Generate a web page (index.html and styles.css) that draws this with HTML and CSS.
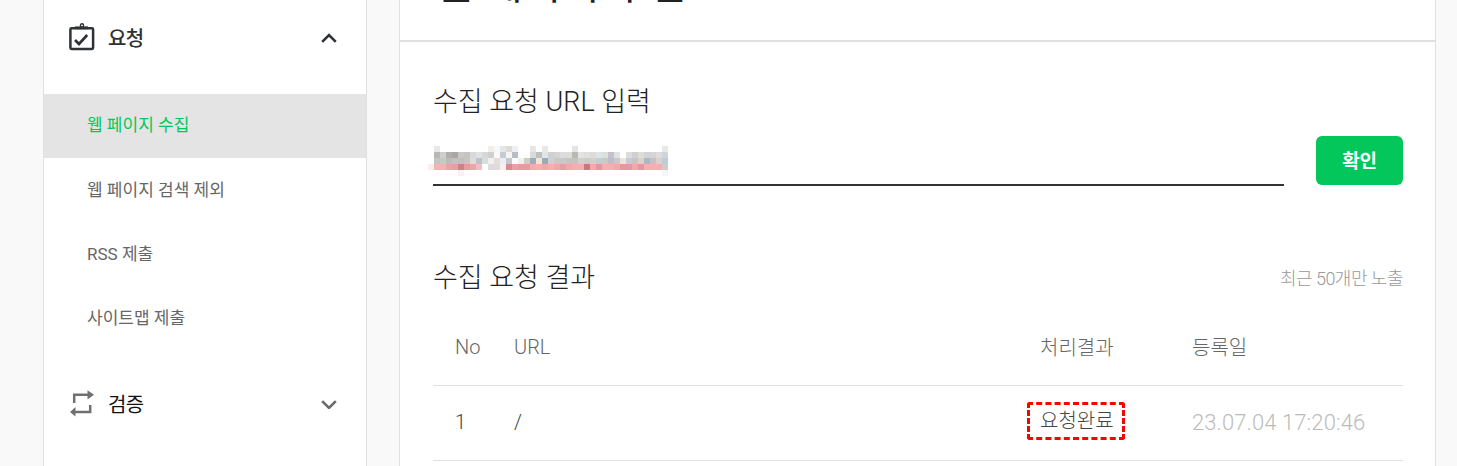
FILE: index.html
```html
<!DOCTYPE html>
<html lang="ko">
<head>
<meta charset="utf-8">
<title>웹 페이지 수집</title>
<link rel="stylesheet" href="styles.css">
</head>
<body>
<div class="shell">
  <aside class="sidebar">
    <div class="group-head">
      <svg class="group-icon" width="26" height="28" viewBox="0 0 26 28" fill="none" stroke="#2f3234" stroke-width="2.5">
        <path d="M6 5.2H2.6a1.2 1.2 0 0 0-1.2 1.2v18.4a1.2 1.2 0 0 0 1.2 1.2h20.3a1.2 1.2 0 0 0 1.2-1.2V6.400a1.200 1.200 0 0 0-1.200-1.200H19"/>
        <path d="M6 3.400h13v3.200H6z" fill="#2f3234" stroke="none"/>
        <circle cx="13" cy="2.400" r="1.600" stroke-width="1.400"/>
        <path d="M6 17l4 4 8.200-9" stroke-width="2.600"/>
      </svg>
      <span class="group-title strong">요청</span>
      <svg class="chevron" width="16" height="12" viewBox="0 0 16 12" fill="none" stroke="#2f3234" stroke-width="2.600"><path d="M1.200 10.900L8 4.100l6.800 6.800"/></svg>
    </div>
    <ul class="menu">
      <li class="menu-item active">웹 페이지 수집</li>
      <li class="menu-item">웹 페이지 검색 제외</li>
      <li class="menu-item">RSS 제출</li>
      <li class="menu-item">사이트맵 제출</li>
    </ul>
    <div class="group-head second">
      <svg class="group-icon" width="26" height="28" viewBox="0 0 26 28" fill="none" stroke="#707070" stroke-width="2.500">
        <path d="M5.200 14V5.800H19"/><path d="M18.500 1.200L25 5.800l-6.500 4.800z" fill="#707070" stroke="none"/>
        <path d="M21.200 16v7H6"/><path d="M6.500 18L1 22.900l5.500 4.600z" fill="#707070" stroke="none"/>
      </svg>
      <span class="group-title">검증</span>
      <svg class="chevron" width="16" height="12" viewBox="0 0 16 12" fill="none" stroke="#6a6a6a" stroke-width="2.600"><path d="M1.200 4.100L8 10.900l6.800-6.800"/></svg>
    </div>
  </aside>
  <main class="content">
    <header class="page-head"><h1 class="page-title">웹 페이지 수집</h1></header>
    <section class="panel">
      <h2 class="section-title first">수집 요청 URL 입력</h2>
      <div class="url-row">
        <div class="url-field">
          <svg class="mosaic" width="246" height="30" viewBox="0 0 246 30">
            <rect x="6" y="0" fill="#e8e8e8"/><rect x="60" y="0" fill="#f2eeea"/><rect x="66" y="0" fill="#f6f8fa"/><rect x="72" y="0" fill="#e6e6e6"/><rect x="78" y="0" fill="#dedcda"/><rect x="84" y="0" fill="#eeeff2"/><rect x="102" y="0" fill="#e6e6e6"/><rect x="114" y="0" fill="#e8e8e8"/><rect x="144" y="0" fill="#e4e4e4"/><rect x="234" y="0" fill="#e8e8e8"/>
            <rect x="6" y="6" fill="#b8b8b6"/><rect x="12" y="6" fill="#d0d0d0"/><rect x="18" y="6" fill="#b0afad"/><rect x="24" y="6" fill="#a8a7a5"/><rect x="30" y="6" fill="#c8c8c8"/><rect x="36" y="6" fill="#c4c4c4"/><rect x="42" y="6" fill="#d8d8d8"/><rect x="48" y="6" fill="#e0e2e2"/><rect x="54" y="6" fill="#d4d8d8"/><rect x="60" y="6" fill="#d0d0ce"/><rect x="66" y="6" fill="#fafafa"/><rect x="72" y="6" fill="#c8ccd0"/><rect x="78" y="6" fill="#f4f4f4"/><rect x="84" y="6" fill="#b8bcc4"/><rect x="90" y="6" fill="#fdfdfb"/><rect x="96" y="6" fill="#fcfcfa"/><rect x="102" y="6" fill="#d8dadb"/><rect x="108" y="6" fill="#bcc0c0"/><rect x="114" y="6" fill="#e4e4e4"/><rect x="120" y="6" fill="#d0d0d0"/><rect x="126" y="6" fill="#d4d4d4"/><rect x="132" y="6" fill="#dcdcdc"/><rect x="138" y="6" fill="#dcdcdc"/><rect x="144" y="6" fill="#b8b8b4"/><rect x="150" y="6" fill="#e4e4e4"/><rect x="156" y="6" fill="#e0e0de"/><rect x="162" y="6" fill="#dedcd8"/><rect x="168" y="6" fill="#dce4e8"/><rect x="174" y="6" fill="#dce0dc"/><rect x="180" y="6" fill="#c4c0cc"/><rect x="186" y="6" fill="#dfe2e4"/><rect x="198" y="6" fill="#dcdcdc"/><rect x="204" y="6" fill="#d0d0d0"/><rect x="210" y="6" fill="#dcdcd8"/><rect x="216" y="6" fill="#d4d4d4"/><rect x="222" y="6" fill="#d4d4d4"/><rect x="228" y="6" fill="#dcdcdc"/><rect x="234" y="6" fill="#d0d4d8"/>
            <rect x="6" y="12" fill="#c4c4c2"/><rect x="12" y="12" fill="#c8c8c6"/><rect x="18" y="12" fill="#bcbcba"/><rect x="24" y="12" fill="#c4c2c0"/><rect x="30" y="12" fill="#c0c0be"/><rect x="36" y="12" fill="#c8c4c2"/><rect x="42" y="12" fill="#dcdcdc"/><rect x="48" y="12" fill="#bcc2c8"/><rect x="54" y="12" fill="#d8dcdc"/><rect x="60" y="12" fill="#f0f0ee"/><rect x="66" y="12" fill="#e4dcd8"/><rect x="72" y="12" fill="#e8eef2"/><rect x="78" y="12" fill="#c4c8cc"/><rect x="84" y="12" fill="#fcfcfc"/><rect x="90" y="12" fill="#ecf0f0"/><rect x="96" y="12" fill="#d0ccc6"/><rect x="102" y="12" fill="#9cacb8"/><rect x="108" y="12" fill="#f0e6d4"/><rect x="114" y="12" fill="#98acb4"/><rect x="120" y="12" fill="#d0d0d0"/><rect x="126" y="12" fill="#c8c8c8"/><rect x="132" y="12" fill="#c8c8c8"/><rect x="138" y="12" fill="#c4c4c4"/><rect x="144" y="12" fill="#c4c4c0"/><rect x="150" y="12" fill="#d0d0ce"/><rect x="156" y="12" fill="#ccccca"/><rect x="162" y="12" fill="#d0d0cc"/><rect x="168" y="12" fill="#c4ccd4"/><rect x="174" y="12" fill="#c4ccc4"/><rect x="180" y="12" fill="#c0bcc8"/><rect x="186" y="12" fill="#c8c8c8"/><rect x="192" y="12" fill="#ece4d8"/><rect x="198" y="12" fill="#c4ccdc"/><rect x="204" y="12" fill="#c8c4c4"/><rect x="210" y="12" fill="#dcd0cc"/><rect x="216" y="12" fill="#a8b8c4"/><rect x="222" y="12" fill="#c8c0c8"/><rect x="228" y="12" fill="#dcd0cc"/><rect x="234" y="12" fill="#bcccd8"/>
            <rect x="0" y="18" fill="#fdeeee"/><rect x="6" y="18" fill="#f4b2b4"/><rect x="12" y="18" fill="#f4b0b2"/><rect x="18" y="18" fill="#e8a4a6"/><rect x="24" y="18" fill="#e4a0a2"/><rect x="30" y="18" fill="#c88488"/><rect x="36" y="18" fill="#e49ea0"/><rect x="42" y="18" fill="#e8a8a8"/><rect x="48" y="18" fill="#f2bcc4"/><rect x="60" y="18" fill="#dcdcdc"/><rect x="66" y="18" fill="#dcdcdc"/><rect x="72" y="18" fill="#fdeeee"/><rect x="78" y="18" fill="#d88c90"/><rect x="84" y="18" fill="#e8a0a4"/><rect x="90" y="18" fill="#e49ca0"/><rect x="96" y="18" fill="#e49ca0"/><rect x="102" y="18" fill="#f2acac"/><rect x="108" y="18" fill="#f4b0b0"/><rect x="114" y="18" fill="#f0a8a8"/><rect x="120" y="18" fill="#f4b0b0"/><rect x="126" y="18" fill="#f0a8a8"/><rect x="132" y="18" fill="#e0a0a8"/><rect x="138" y="18" fill="#f0a8a8"/><rect x="144" y="18" fill="#f4b0b0"/><rect x="150" y="18" fill="#f4b0b0"/><rect x="156" y="18" fill="#c87880"/><rect x="162" y="18" fill="#f8a8a8"/><rect x="168" y="18" fill="#e098a0"/><rect x="174" y="18" fill="#f4b0b0"/><rect x="180" y="18" fill="#f4b0b0"/><rect x="186" y="18" fill="#f0a8a8"/><rect x="192" y="18" fill="#e498a0"/><rect x="198" y="18" fill="#e498a0"/><rect x="204" y="18" fill="#f0a8a8"/><rect x="210" y="18" fill="#e098a4"/><rect x="216" y="18" fill="#f4b0b0"/><rect x="222" y="18" fill="#f4b0b0"/><rect x="228" y="18" fill="#f4b0b0"/><rect x="234" y="18" fill="#d4c8c8"/>
            <rect x="30" y="24" fill="#f4f4f4"/><rect x="234" y="24" fill="#f6f6f6"/>
          </svg>
        </div>
        <button class="confirm" type="button">확인</button>
      </div>
      <div class="result-head">
        <h2 class="section-title">수집 요청 결과</h2>
        <span class="note">최근 50개만 노출</span>
      </div>
      <div class="table-row header">
        <span class="col-no">No</span><span class="col-url">URL</span><span class="col-status">처리결과</span><span class="col-date">등록일</span>
      </div>
      <div class="table-row body-row">
        <span class="col-no">1</span><span class="col-url">/</span><span class="col-status"><span class="done">요청완료</span></span><span class="col-date muted">23.07.04 17:20:46</span>
      </div>
    </section>
  </main>
</div>
</body>
</html>
```

FILE: styles.css
```css
* { box-sizing: border-box; }
html, body { margin: 0; padding: 0; height: 466px; overflow: hidden; }
body {
  background: #f9f9f9;
  font-family: Roboto, "Noto Sans CJK KR", sans-serif;
  color: #333;
}
.shell { display: flex; gap: 32px; padding-left: 43px; height: 466px; overflow: hidden; }

.sidebar {
  width: 324px; height: 466px; flex: none;
  background: #fff;
  border-left: 1px solid #e0e0e0; border-right: 1px solid #e0e0e0;
  padding-top: 3px;
}
.group-head { display: flex; align-items: center; height: 68px; padding: 0 29px 0 25px; }
.group-head.second { margin-top: 19px; }
.group-icon { flex: none; }
.group-title { margin-left: 13px; font-size: 20px; letter-spacing: -0.6px; color: #111; flex: 1; }
.group-title.strong { font-weight: 500; color: #2f3234; }
.chevron { flex: none; }
.menu { list-style: none; margin: 23px 0 0; padding: 0; }
.menu-item { height: 64px; line-height: 64px; padding-left: 43px; font-size: 17px; color: #666; }
.menu-item.active { background: #e4e4e4; color: #03c75a; line-height: 62px; }

.content {
  width: 1037px; height: 466px; flex: none;
  background: #fff;
  border-left: 1px solid #e0e0e0; border-right: 1px solid #e0e0e0;
}
.page-head { height: 42px; border-bottom: 2px solid #e0e0e0; overflow: hidden; padding-left: 35px; }
.page-title { margin: -36px 0 0; font-size: 42px; line-height: 42px; font-weight: 400; color: #222; }
.panel { padding: 0 32px 0 33px; }
.section-title { margin: 0; font-size: 27px; font-weight: 300; color: #222; line-height: 38px; }
.section-title.first { margin-top: 41px; }
.url-row { display: flex; align-items: flex-end; gap: 32px; margin-top: 15px; height: 50px; }
.url-field { flex: 1; height: 45px; border-bottom: 2px solid #333; display: flex; align-items: flex-end; }
.mosaic { display: block; margin: 0 0 8px -5px; flex: none; }
.mosaic rect { width: 6px; height: 6px; }
.confirm {
  width: 87px; height: 49px; margin-bottom: 1px; padding: 0 0 2px; border: 0; border-radius: 6px;
  background: #03c75a; color: #fff; font: inherit; font-size: 19px; font-weight: 700; letter-spacing: -0.3px;
}
.result-head { display: flex; justify-content: space-between; align-items: center; height: 64px; margin-top: 60px; }
.note { font-size: 18px; font-weight: 300; letter-spacing: -0.5px; color: #999; margin-bottom: 3px; }
.table-row { display: flex; align-items: center; border-bottom: 1px solid #e0e0e0; font-size: 20px; color: #666; font-weight: 300; }
.table-row.header { height: 76px; padding-bottom: 2px; }
.table-row.body-row { height: 75px; padding-bottom: 2px; color: #444; }
.col-no { width: 81px; padding-left: 22px; flex: none; }
.col-url { flex: 1; }
.col-status { width: 152px; flex: none; }
.col-date { width: 211px; flex: none; }
.muted { color: #bbb; font-size: 22px; letter-spacing: 0.1px; }
.done {
  display: inline-block; margin: 0 0 3px -13px; padding: 1px 8px 0 10px;
  line-height: 31px; border: 3px dashed #f00; border-radius: 3px;
}
```
